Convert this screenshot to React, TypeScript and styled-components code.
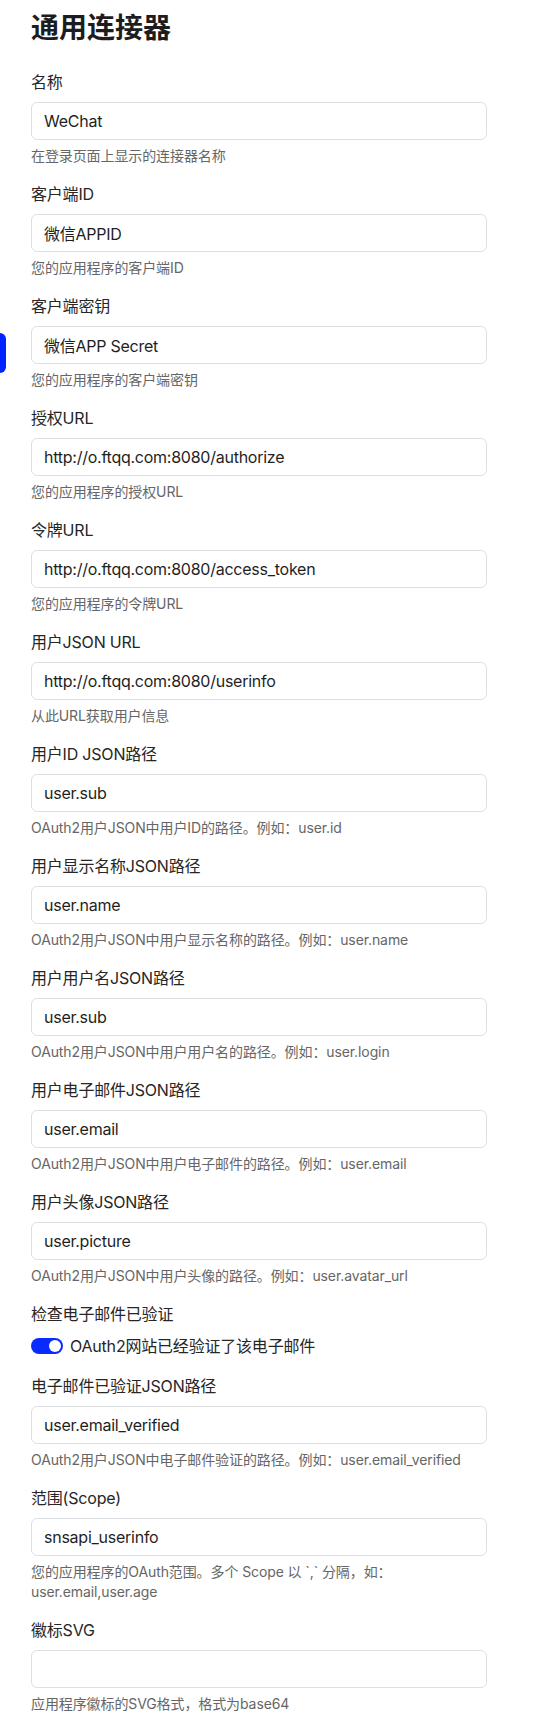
import React from "react";
import styled, { createGlobalStyle } from "styled-components";

const GlobalStyle = createGlobalStyle`
  html, body {
    margin: 0;
    padding: 0;
    background: #ffffff;
  }
  body {
    font-family: Inter, "Noto Sans CJK SC", "Noto Sans", sans-serif;
    color: #1f1f1f;
    -webkit-font-smoothing: antialiased;
  }
  * { box-sizing: border-box; }
`;

const Page = styled.main`
  position: relative;
  padding: 11px 53px 24px 31px;
`;

const Title = styled.h1`
  margin: 0 0 24px;
  font-size: 28px;
  line-height: 35px;
  font-weight: 700;
  color: #1d1d1f;
`;

const Field = styled.div`
  display: flex;
  flex-direction: column;
  margin-bottom: 16px;
`;

const Label = styled.label`
  font-size: 16px;
  line-height: 24px;
  color: #262626;
  letter-spacing: -0.2px;
  margin-bottom: 8px;
`;

const Input = styled.input`
  width: 100%;
  height: 38px;
  padding: 0 12px;
  border: 1px solid #dcdfe4;
  border-radius: 6px;
  font-family: inherit;
  font-size: 16px;
  letter-spacing: -0.25px;
  color: #1f1f1f;
  background: #fff;
  outline: none;
`;

const Hint = styled.p`
  margin: 6px 0 0;
  font-size: 14px;
  line-height: 20px;
  letter-spacing: -0.1px;
  color: #666666;
`;

const ToggleRow = styled.div`
  display: flex;
  align-items: center;
  gap: 7px;
  height: 24px;
`;

const Track = styled.span<{ $on: boolean }>`
  position: relative;
  display: inline-block;
  width: 32px;
  height: 16px;
  border-radius: 8px;
  background: ${(p) => (p.$on ? "#0a2bff" : "#d0d4da")};
  flex-shrink: 0;
`;

const Knob = styled.span<{ $on: boolean }>`
  position: absolute;
  top: 2px;
  left: ${(p) => (p.$on ? "18px" : "2px")};
  width: 12px;
  height: 12px;
  border-radius: 50%;
  background: #fff;
`;

const ToggleText = styled.span`
  font-size: 16px;
  line-height: 24px;
  letter-spacing: -0.2px;
  color: #262626;
`;

const SideTab = styled.div`
  position: absolute;
  left: 0;
  top: 333px;
  width: 6px;
  height: 40px;
  background: #0022ff;
  border-radius: 0 6px 6px 0;
`;

type F = { label: string; value: string; hint: string };

const before: F[] = [
  { label: "名称", value: "WeChat", hint: "在登录页面上显示的连接器名称" },
  { label: "客户端ID", value: "微信APPID", hint: "您的应用程序的客户端ID" },
  { label: "客户端密钥", value: "微信APP Secret", hint: "您的应用程序的客户端密钥" },
  { label: "授权URL", value: "http://o.ftqq.com:8080/authorize", hint: "您的应用程序的授权URL" },
  { label: "令牌URL", value: "http://o.ftqq.com:8080/access_token", hint: "您的应用程序的令牌URL" },
  { label: "用户JSON URL", value: "http://o.ftqq.com:8080/userinfo", hint: "从此URL获取用户信息" },
  { label: "用户ID JSON路径", value: "user.sub", hint: "OAuth2用户JSON中用户ID的路径。例如：user.id" },
  { label: "用户显示名称JSON路径", value: "user.name", hint: "OAuth2用户JSON中用户显示名称的路径。例如：user.name" },
  { label: "用户用户名JSON路径", value: "user.sub", hint: "OAuth2用户JSON中用户用户名的路径。例如：user.login" },
  { label: "用户电子邮件JSON路径", value: "user.email", hint: "OAuth2用户JSON中用户电子邮件的路径。例如：user.email" },
  { label: "用户头像JSON路径", value: "user.picture", hint: "OAuth2用户JSON中用户头像的路径。例如：user.avatar_url" },
];

const after: F[] = [
  { label: "电子邮件已验证JSON路径", value: "user.email_verified", hint: "OAuth2用户JSON中电子邮件验证的路径。例如：user.email_verified" },
  { label: "范围(Scope)", value: "snsapi_userinfo", hint: "您的应用程序的OAuth范围。多个 Scope 以 `,` 分隔，如：user.email,user.age" },
  { label: "徽标SVG", value: "", hint: "应用程序徽标的SVG格式，格式为base64" },
];

const TextField = ({ label, value, hint }: F) => (
  <Field>
    <Label>{label}</Label>
    <Input defaultValue={value} />
    <Hint>{hint}</Hint>
  </Field>
);

export default function App() {
  return (
    <>
      <GlobalStyle />
      <Page>
        <SideTab />
        <Title>通用连接器</Title>
        {before.map((f) => (
          <TextField key={f.label} {...f} />
        ))}
        <Field>
          <Label>检查电子邮件已验证</Label>
          <ToggleRow>
            <Track $on>
              <Knob $on />
            </Track>
            <ToggleText>OAuth2网站已经验证了该电子邮件</ToggleText>
          </ToggleRow>
        </Field>
        {after.map((f) => (
          <TextField key={f.label} {...f} />
        ))}
      </Page>
    </>
  );
}
